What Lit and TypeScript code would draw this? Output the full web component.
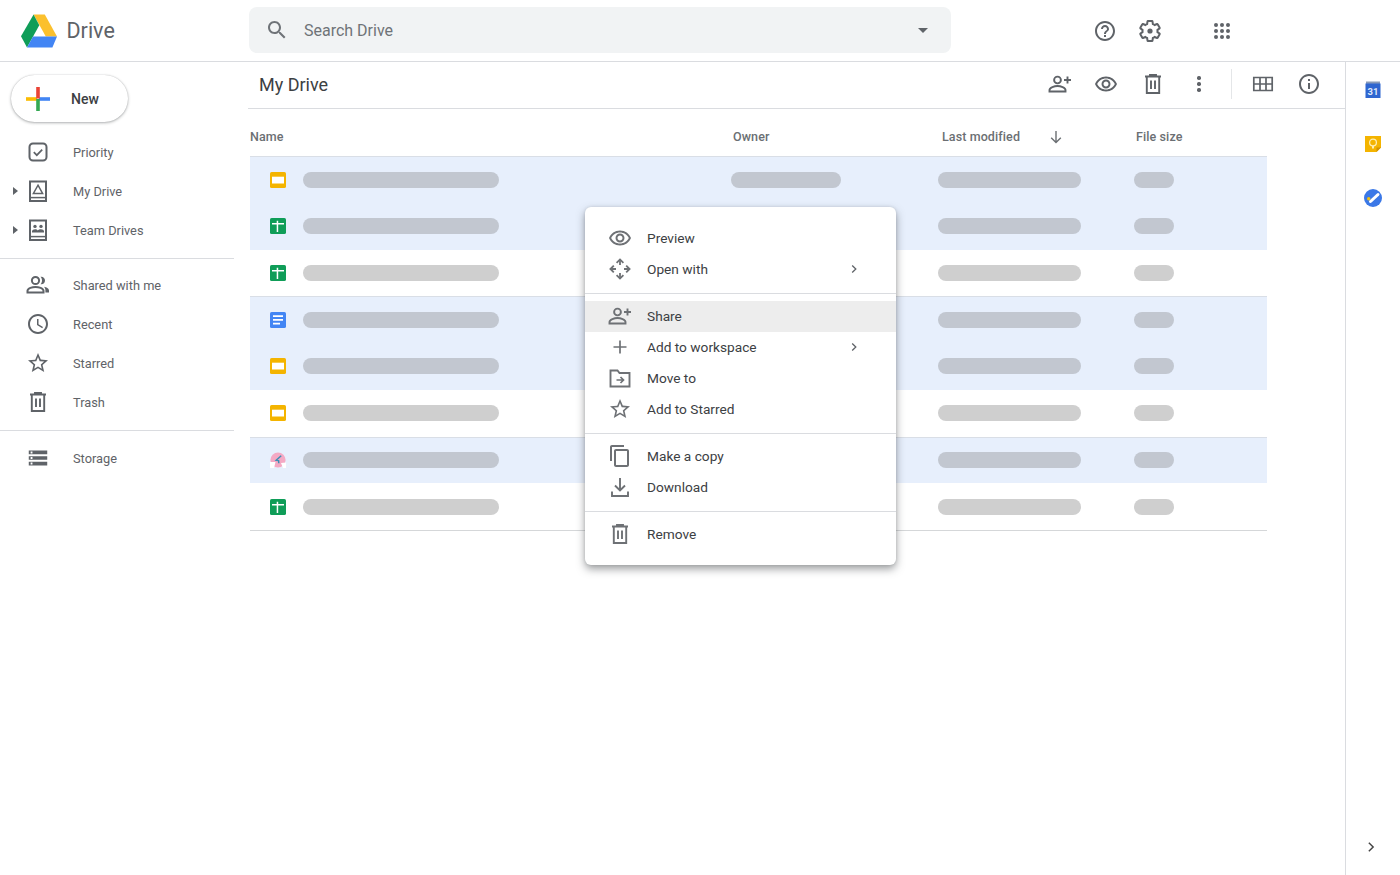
import { LitElement, css, html, svg } from 'lit';
import { customElement } from 'lit/decorators.js';

const P = {
  search: 'M15.5 14h-.79l-.28-.27C15.41 12.59 16 11.11 16 9.5 16 5.91 13.09 3 9.5 3S3 5.91 3 9.5 5.91 16 9.5 16c1.61 0 3.09-.59 4.23-1.57l.27.28v.79l5 4.99L20.49 19l-4.99-5zm-6 0C7.01 14 5 11.99 5 9.5S7.01 5 9.5 5 14 7.01 14 9.5 11.99 14 9.5 14z',
  help: 'M11 18h2v-2h-2v2zm1-16C6.48 2 2 6.48 2 12s4.48 10 10 10 10-4.48 10-10S17.52 2 12 2zm0 18c-4.41 0-8-3.59-8-8s3.59-8 8-8 8 3.59 8 8-3.59 8-8 8zm0-14c-2.21 0-4 1.79-4 4h2c0-1.1.9-2 2-2s2 .9 2 2c0 2-3 1.75-3 5h2c0-2.25 3-2.5 3-5 0-2.21-1.79-4-4-4z',
  clock: 'M11.99 2C6.47 2 2 6.48 2 12s4.47 10 9.99 10C17.52 22 22 17.52 22 12S17.52 2 11.99 2zM12 20c-4.42 0-8-3.58-8-8s3.58-8 8-8 8 3.58 8 8-3.58 8-8 8zm.5-13H11v6l5.25 3.15.75-1.23-4.5-2.67z',
  star: 'M22 9.24l-7.19-.62L12 2 9.19 8.63 2 9.24l5.46 4.73L5.82 21 12 17.27 18.18 21l-1.63-7.03L22 9.24zM12 15.4l-3.76 2.27 1-4.28-3.32-2.88 4.38-.38L12 6.1l1.71 4.04 4.38.38-3.32 2.88 1 4.28L12 15.4z',
  storage: 'M2 20h20v-4H2v4zm2-3h2v2H4v-2zM2 4v4h20V4H2zm4 3H4V5h2v2zm-4 7h20v-4H2v4zm2-3h2v2H4v-2z',
  eye: 'M12 6.5c3.79 0 7.17 2.13 8.82 5.5-1.65 3.37-5.02 5.5-8.82 5.5S4.83 15.37 3.18 12C4.83 8.63 8.21 6.5 12 6.5m0-2C7 4.5 2.73 7.61 1 12c1.73 4.39 6 7.5 11 7.5s9.27-3.11 11-7.5c-1.73-4.39-6-7.5-11-7.5zm0 5c1.38 0 2.5 1.12 2.5 2.5s-1.12 2.5-2.5 2.5-2.5-1.12-2.5-2.5 1.12-2.5 2.5-2.5m0-2c-2.48 0-4.5 2.02-4.5 4.5s2.02 4.5 4.5 4.5 4.5-2.02 4.5-4.5-2.02-4.5-4.5-4.5z',
  info: 'M11 7h2v2h-2zm0 4h2v6h-2zm1-9C6.48 2 2 6.48 2 12s4.48 10 10 10 10-4.48 10-10S17.52 2 12 2zm0 18c-4.41 0-8-3.59-8-8s3.59-8 8-8 8 3.59 8 8-3.59 8-8 8z',
  copy: 'M16 1H4c-1.1 0-2 .9-2 2v14h2V3h12V1zm3 4H8c-1.1 0-2 .9-2 2v14c0 1.1.9 2 2 2h11c1.1 0 2-.9 2-2V7c0-1.1-.9-2-2-2zm0 16H8V7h11v14z',
  gear: 'M19.43 12.98c.04-.32.07-.64.07-.98s-.03-.66-.07-.98l2.11-1.65c.19-.15.24-.42.12-.64l-2-3.46c-.12-.22-.39-.3-.61-.22l-2.49 1c-.52-.4-1.08-.73-1.69-.98l-.38-2.65C14.46 2.18 14.25 2 14 2h-4c-.25 0-.46.18-.49.42l-.38 2.65c-.61.25-1.17.59-1.69.98l-2.49-1c-.23-.09-.49 0-.61.22l-2 3.46c-.13.22-.07.49.12.64l2.11 1.65c-.04.32-.07.65-.07.98s.03.66.07.98l-2.11 1.65c-.19.15-.24.42-.12.64l2 3.46c.12.22.39.3.61.22l2.49-1c.52.4 1.08.73 1.69.98l.38 2.65c.03.24.24.42.49.42h4c.25 0 .46-.18.49-.42l.38-2.65c.61-.25 1.17-.59 1.69-.98l2.49 1c.23.09.49 0 .61-.22l2-3.46c.12-.22.07-.49-.12-.64l-2.11-1.65z',
};

const fillIcon = (d: string) => html`<svg class="ic" viewBox="0 0 24 24"><path d=${d}></path></svg>`;

const personAdd = html`<svg class="ic" viewBox="0 0 24 24" fill="none" stroke="currentColor" stroke-width="1.9">
  <circle cx="9.5" cy="8" r="3.4"></circle>
  <path d="M1.5 19.5v-1.6c0-2.5 5-3.9 8-3.9s8 1.4 8 3.9v1.6z"></path>
  <path d="M19.5 4.5v7M16 8h7"></path>
</svg>`;

const trash = html`<svg class="ic" viewBox="0 0 24 24" fill="none" stroke="currentColor" stroke-width="1.9">
  <path d="M4 4.5h16M9 4.5V3h6v1.5M5.8 4.5V21h12.4V4.5M10 8.5v8.5M14 8.5v8.5"></path>
</svg>`;

const icons: Record<string, unknown> = {
  priority: html`<svg class="ic" viewBox="0 0 24 24" fill="none" stroke="currentColor" stroke-width="2">
    <rect x="3.5" y="3.5" width="17" height="17" rx="3.5"></rect>
    <path d="M7.8 12.2l3 3 5.4-5.6" stroke-width="1.7"></path>
  </svg>`,
  mydrive: html`<svg class="ic" viewBox="0 0 24 24" fill="none" stroke="currentColor" stroke-width="2">
    <path d="M4 2.5h16V22H4z"></path>
    <path d="M4 18.6h16" stroke-width="1.5"></path>
    <path d="M12 6.2l4.6 8.2H7.4z" stroke-width="1.5"></path>
  </svg>`,
  teamdrives: html`<svg class="ic" viewBox="0 0 24 24" fill="none" stroke="currentColor" stroke-width="2">
    <path d="M4 2.5h16V22H4z"></path>
    <path d="M4 18.6h16" stroke-width="1.5"></path>
    <g fill="currentColor" stroke="none">
      <circle cx="9" cy="8.4" r="1.7"></circle>
      <circle cx="15" cy="8.4" r="1.7"></circle>
      <path d="M6 14.5v-1.2c0-1.3 1.8-2 3-2s2.4.5 2.8 1.3c.4-.8 1.9-1.3 3.2-1.3s3 .7 3 2v1.2z"></path>
    </g>
  </svg>`,
  shared: html`<svg class="ic" viewBox="0 0 24 24" fill="none" stroke="currentColor" stroke-width="2">
    <circle cx="9.5" cy="7.5" r="3.6"></circle>
    <path d="M1.5 19.5v-1.7c0-2.6 5-3.8 8-3.8s8 1.2 8 3.8v1.7z"></path>
    <path d="M14.5 3.8c2.6-.5 4.5 1.5 4.5 3.7s-1.9 4.2-4.5 3.7c1-1 1.5-2.3 1.5-3.7s-.5-2.7-1.5-3.7z" fill="currentColor" stroke="none"></path>
    <path d="M18 13.8c2.4.5 5 1.6 5 3.8v1.9h-3.6v-2c0-1.6-.5-2.7-1.4-3.7z" fill="currentColor" stroke="none"></path>
  </svg>`,
  clock: fillIcon(P.clock),
  star: fillIcon(P.star),
  trash,
  storage: html`<svg class="ic" viewBox="-1 -1 26 26"><path d=${P.storage}></path></svg>`,
  eye: fillIcon(P.eye),
  openwith: html`<svg class="ic" viewBox="0 0 24 24" fill="none" stroke="currentColor" stroke-width="1.8">
    <path d="M8.6 5.8L12 2.4l3.4 3.4M8.6 18.2l3.4 3.4 3.4-3.4M5.8 8.6L2.4 12l3.4 3.4M18.2 8.6l3.4 3.4-3.4 3.4"></path>
    <path d="M12 3v5M12 16v5M3 12h5M16 12h5"></path>
  </svg>`,
  person: personAdd,
  plus: html`<svg class="ic" viewBox="0 0 24 24" fill="none" stroke="currentColor" stroke-width="1.7">
    <path d="M12 5.5v13M5.5 12h13"></path>
  </svg>`,
  move: html`<svg class="ic" viewBox="0 0 24 24" fill="none" stroke="currentColor" stroke-width="1.9">
    <path d="M2.5 4.5h7l2 2.5h10v13.5h-19z"></path>
    <path d="M8.5 14h6.5M12.5 11l3 3-3 3" stroke-width="1.7"></path>
  </svg>`,
  copy: fillIcon(P.copy),
  download: html`<svg class="ic" viewBox="0 0 24 24" fill="none" stroke="currentColor" stroke-width="1.9">
    <path d="M12 3v12M7 10.5l5 5 5-5M4 16.5V21h16v-4.5"></path>
  </svg>`,
};

const chevron = html`<svg class="chev" viewBox="0 0 10 10" fill="none" stroke="currentColor" stroke-width="1.3">
  <path d="M3.2 1.5L6.8 5 3.2 8.5"></path>
</svg>`;

const fileIcons: Record<string, unknown> = {
  slides: html`<svg class="file" viewBox="0 0 16 16"><rect width="16" height="16" rx="1.6" fill="#f4b400"></rect><rect x="2" y="4.7" width="12" height="6.8" fill="#fff"></rect></svg>`,
  sheets: html`<svg class="file" viewBox="0 0 16 16"><rect width="16" height="16" rx="1.6" fill="#0f9d58"></rect><path d="M6.7 2.8h1.5v2.2H14v1.4H8.2V14H6.7V6.4H2V5h4.7z" fill="#fff"></path></svg>`,
  docs: html`<svg class="file" viewBox="0 0 16 16"><rect width="16" height="16" rx="1.6" fill="#4285f4"></rect><path d="M3 3.2h10v1.8H3zM3 7h10v1.8H3zM3 10.8h7v1.8H3z" fill="#fff"></path></svg>`,
  drawing: html`<svg class="file" viewBox="0 0 16 16"><circle cx="8" cy="8" r="7.6" fill="#f4a9c4"></circle><path d="M0 10h5.5L4 16H0zM16 10.5l-5 .5 2 5h3z" fill="#fff"></path><path d="M11.2 3.8L6.2 8.2l2.4.4.2 2.6" fill="none" stroke="#3d8fb5" stroke-width="1.5"></path></svg>`,
};

const rows = [
  { type: 'slides', selected: true, owner: true, top: true },
  { type: 'sheets', selected: true, owner: false, top: false },
  { type: 'sheets', selected: false, owner: false, top: false },
  { type: 'docs', selected: true, owner: false, top: true },
  { type: 'slides', selected: true, owner: false, top: false },
  { type: 'slides', selected: false, owner: false, top: false },
  { type: 'drawing', selected: true, owner: false, top: true },
  { type: 'sheets', selected: false, owner: false, top: false },
];

const navGroups = [
  [
    { icon: 'priority', label: 'Priority', arrow: false },
    { icon: 'mydrive', label: 'My Drive', arrow: true },
    { icon: 'teamdrives', label: 'Team Drives', arrow: true },
  ],
  [
    { icon: 'shared', label: 'Shared with me', arrow: false },
    { icon: 'clock', label: 'Recent', arrow: false },
    { icon: 'star', label: 'Starred', arrow: false },
    { icon: 'trash', label: 'Trash', arrow: false },
  ],
  [{ icon: 'storage', label: 'Storage', arrow: false }],
];

const menuGroups = [
  [
    { icon: 'eye', label: 'Preview' },
    { icon: 'openwith', label: 'Open with', more: true },
  ],
  [
    { icon: 'person', label: 'Share', active: true },
    { icon: 'plus', label: 'Add to workspace', more: true },
    { icon: 'move', label: 'Move to' },
    { icon: 'star', label: 'Add to Starred' },
  ],
  [
    { icon: 'copy', label: 'Make a copy' },
    { icon: 'download', label: 'Download' },
  ],
  [{ icon: 'trash', label: 'Remove' }],
];

@customElement('app-root')
export class AppRoot extends LitElement {
  static styles = css`
    :host {
      display: flex;
      flex-direction: column;
      position: relative;
      height: 875px;
      overflow: hidden;
      background: #fff;
      font-family: Roboto, "Liberation Sans", sans-serif;
      color: #5f6368;
    }

    .ic {
      display: block;
      width: 24px;
      height: 24px;
      fill: currentColor;
      flex: none;
    }
    .ic[fill='none'] {
      fill: none;
    }

    header {
      display: flex;
      align-items: center;
      height: 61px;
      flex: none;
      border-bottom: 1px solid #dadce0;
    }
    .brand {
      display: flex;
      align-items: center;
      gap: 9.5px;
      width: 228px;
      padding-left: 21px;
      font-size: 21.5px;
      color: #5f6368;
    }
    .search {
      display: flex;
      align-items: center;
      width: 702px;
      height: 46px;
      margin-bottom: 1px;
      padding: 0 16px;
      box-sizing: border-box;
      border-radius: 8px;
      background: #f1f3f4;
      font-size: 16px;
      color: #6f7378;
    }
    .search .ic {
      margin-right: 15px;
    }
    .search span {
      flex: 1;
    }
    .caret {
      width: 0;
      height: 0;
      margin-right: 7px;
      border: 5px solid transparent;
      border-top: 5px solid #5f6368;
      border-bottom: 0;
    }
    .top-icons {
      display: flex;
      align-items: center;
      margin-left: 142px;
    }
    .top-icons .ic:nth-child(2) {
      margin: 0 48px 0 21px;
    }

    .body {
      flex: 1;
      display: flex;
      min-height: 0;
    }

    nav {
      width: 234px;
      flex: none;
      padding-top: 13px;
    }
    .new {
      display: flex;
      align-items: center;
      width: 117px;
      height: 47px;
      margin-left: 11px;
      box-sizing: border-box;
      padding-left: 15px;
      gap: 21px;
      border-radius: 24px;
      background: #fff;
      box-shadow: 0 1px 3px rgba(60, 64, 67, 0.4), 0 0 1px rgba(60, 64, 67, 0.3);
      font-size: 14px;
      font-weight: 500;
      color: #3c4043;
    }
    .new svg {
      width: 24px;
      height: 24px;
    }
    .nav-group {
      padding-bottom: 8.5px;
      border-top: 1px solid #dadce0;
    }
    .nav-group:nth-child(1) {
      border-top: 0;
      padding-top: 10.5px;
    }
    .nav-group:nth-child(2) {
      padding-top: 6.5px;
    }
    .nav-group:nth-child(3) {
      padding-top: 7.5px;
    }
    .nav-item {
      display: grid;
      grid-template-columns: 11px 15px 24px 1fr;
      align-items: center;
      height: 39px;
      font-size: 12.8px;
      color: #5f6368;
    }
    .nav-item .ic {
      grid-column: 3;
      grid-row: 1;
    }
    .nav-item span {
      grid-column: 4;
      padding-left: 23px;
    }
    .arrow {
      grid-column: 2;
      grid-row: 1;
      width: 0;
      height: 0;
      border: 4.5px solid transparent;
      border-left: 5px solid #5f6368;
      border-right: 0;
      margin-left: 2px;
    }

    main {
      flex: 1;
      min-width: 0;
      margin-left: 14px;
    }
    .toolbar {
      display: flex;
      align-items: center;
      height: 44px;
      padding-left: 11px;
      padding-bottom: 2px;
      border-bottom: 1px solid #dadce0;
      font-size: 18px;
      color: #3c4043;
    }
    .title {
      flex: 1;
    }
    .actions {
      display: flex;
      align-items: center;
      padding-right: 24px;
      color: #5f6368;
    }
    .actions > * {
      margin-left: 22.5px;
    }
    .vert {
      width: 24px;
      height: 24px;
      display: flex;
      flex-direction: column;
      align-items: center;
      justify-content: center;
      gap: 2.6px;
    }
    .vert i {
      width: 3.4px;
      height: 3.4px;
      border-radius: 50%;
      background: #5f6368;
    }
    .sep {
      width: 1px;
      height: 30px;
      background: #e4e6e8;
      margin-left: 20px;
      margin-right: -4px;
    }

    .table {
      width: 1017px;
      margin-left: 2px;
    }
    .cols {
      display: grid;
      grid-template-columns: 481px 207px 196px 1fr;
      align-items: center;
    }
    .head {
      height: 47px;
      font-size: 12.5px;
      font-weight: 500;
      letter-spacing: 0.1px;
      color: #6b6f73;
      padding-top: 17px;
      box-sizing: border-box;
      padding-bottom: 9px;
    }
    .head div:nth-child(2),
    .head div:nth-child(4) {
      padding-left: 2px;
    }
    .head div:nth-child(3) {
      display: flex;
      align-items: center;
      padding-left: 4px;
    }
    .head svg {
      width: 16px;
      height: 16px;
      margin-left: 28px;
    }
    .row {
      height: 46.75px;
      box-sizing: border-box;
    }
    .row.top {
      border-top: 1px solid #d9dee6;
    }
    .row.sel {
      background: #e7effc;
    }
    .name {
      display: flex;
      align-items: center;
      gap: 17px;
      padding-left: 20px;
    }
    .file {
      display: block;
      width: 16px;
      height: 16px;
    }
    .pill {
      height: 16px;
      border-radius: 8px;
      background: #cfcfcf;
    }
    .sel .pill {
      background: #c2c7d0;
    }
    .table-end {
      border-top: 1px solid #d5d7d9;
    }

    .rail {
      width: 55px;
      flex: none;
      display: flex;
      flex-direction: column;
      align-items: center;
      border-left: 1px solid #dadce0;
      padding-top: 19px;
      box-sizing: border-box;
    }
    .rail .app {
      display: block;
      width: 18px;
      height: 18px;
      margin-bottom: 36px;
    }
    .rail .more {
      margin-top: auto;
      margin-bottom: 22px;
      margin-right: 4px;
      width: 12px;
      height: 12px;
      color: #444;
    }
    .rail text {
      font: 700 9.5px Roboto, sans-serif;
    }

    .menu {
      position: absolute;
      left: 585px;
      top: 207px;
      width: 311px;
      height: 358px;
      box-sizing: border-box;
      padding-top: 15.5px;
      border-radius: 6px;
      background: #fff;
      box-shadow: 0 4px 8px rgba(60, 64, 67, 0.5), 0 0 3px rgba(60, 64, 67, 0.15);
    }
    .menu-group {
      padding: 7px 0 8px;
      border-top: 1px solid #dadce0;
    }
    .menu-group:first-child {
      border-top: 0;
      padding-top: 0;
    }
    .menu-item {
      display: flex;
      align-items: center;
      height: 31px;
      padding-left: 23px;
      font-size: 13.7px;
      color: #3c4043;
    }
    .menu-item.active {
      background: #ededed;
    }
    .menu-item .ic {
      color: #6e7175;
      margin-right: 15px;
    }
    .menu-item span {
      flex: 1;
    }
    .chev {
      display: block;
      width: 10px;
      height: 10px;
      margin-right: 37px;
      color: #5f6368;
    }
  `;

  private renderRow(r: (typeof rows)[number]) {
    const cls = `cols row${r.selected ? ' sel' : ''}${r.top ? ' top' : ''}`;
    return html`<div class=${cls}>
      <div class="name">${fileIcons[r.type]}<div class="pill" style="width:196px"></div></div>
      <div>${r.owner ? html`<div class="pill" style="width:110px"></div>` : ''}</div>
      <div class="pill" style="width:143px"></div>
      <div class="pill" style="width:40px"></div>
    </div>`;
  }

  render() {
    return html`
      <header>
        <div class="brand">
          <svg width="36" height="34" viewBox="21 14 36 33">
            <path d="M33.6 14h11.2l12.2 22H45.8z" fill="#fbc02d"></path>
            <path d="M33.6 14L21 35.8 27 47l12.3-22.3z" fill="#0f9d58"></path>
            <path d="M27 47h25.4L57 36H33z" fill="#4285f4"></path>
          </svg>
          <span>Drive</span>
        </div>
        <div class="search">
          ${fillIcon(P.search)}
          <span>Search Drive</span>
          <div class="caret"></div>
        </div>
        <div class="top-icons">
          ${fillIcon(P.help)}
          <svg class="ic" viewBox="0 0 24 24" fill="none" stroke="currentColor" stroke-width="2">
            <path d=${P.gear}></path>
            <circle cx="12" cy="12" r="2.6" fill="currentColor" stroke="none"></circle>
          </svg>
          <svg class="ic" viewBox="0 0 24 24">
            ${[6, 12, 18].map(y => [6, 12, 18].map(x => svg`<circle cx=${x} cy=${y} r="2"></circle>`))}
          </svg>
        </div>
      </header>
      <div class="body">
        <nav>
          <div class="new">
            <svg viewBox="0 0 24 24">
              <rect x="0" y="10.2" width="11" height="3.6" fill="#fbbc04"></rect>
              <rect x="13" y="10.2" width="11" height="3.6" fill="#4285f4"></rect>
              <rect x="10.2" y="0" width="3.6" height="11.5" fill="#ea4335"></rect>
              <rect x="10.2" y="12" width="3.6" height="12" fill="#34a853"></rect>
            </svg>
            New
          </div>
          <div>
            ${navGroups.map(g => html`<div class="nav-group">
              ${g.map(n => html`<div class="nav-item">
                ${n.arrow ? html`<div class="arrow"></div>` : ''}
                ${icons[n.icon]}
                <span>${n.label}</span>
              </div>`)}
            </div>`)}
          </div>
        </nav>
        <main>
          <div class="toolbar">
            <div class="title">My Drive</div>
            <div class="actions">
              ${personAdd}
              ${fillIcon(P.eye)}
              ${trash}
              <div class="vert"><i></i><i></i><i></i></div>
              <div class="sep"></div>
              <svg class="ic" viewBox="0 0 24 24" fill="none" stroke="currentColor" stroke-width="1.7">
                <path d="M2.8 5.5h18.4v13H2.8zM2.8 12h18.4M9 5.5v13M15 5.5v13"></path>
              </svg>
              ${fillIcon(P.info)}
            </div>
          </div>
          <div class="table">
            <div class="cols head">
              <div>Name</div>
              <div>Owner</div>
              <div>
                Last modified
                <svg viewBox="0 0 16 16" fill="none" stroke="currentColor" stroke-width="1.4">
                  <path d="M8 2v11.5M3.2 8.8L8 13.5l4.8-4.7"></path>
                </svg>
              </div>
              <div>File size</div>
            </div>
            ${rows.map(r => this.renderRow(r))}
            <div class="table-end"></div>
          </div>
        </main>
        <aside class="rail">
          <svg class="app" viewBox="0 0 18 18">
            <rect x="2" y="0.5" width="14" height="3" fill="#8a9bb8"></rect>
            <rect x="1.5" y="2.5" width="15" height="14.5" fill="#2f66d0"></rect>
            <text x="9" y="13.5" text-anchor="middle" fill="#dfe8fa">31</text>
          </svg>
          <svg class="app" viewBox="0 0 18 18">
            <path d="M1 1h16v11.5L12.5 17H1z" fill="#f4b400"></path>
            <path d="M17 12.5L12.5 17v-4.5z" fill="#d29200"></path>
            <circle cx="9" cy="7.5" r="3.4" fill="none" stroke="#fdeeb5" stroke-width="1.3"></circle>
            <path d="M8 11v2.5h2V11z" fill="#fdeeb5"></path>
          </svg>
          <svg class="app" viewBox="0 0 18 18">
            <circle cx="9" cy="9" r="9" fill="#3b78e7"></circle>
            <path d="M6.5 12.5L14 5.5" stroke="#fff" stroke-width="3" stroke-linecap="round"></path>
            <circle cx="4.7" cy="9.8" r="1.7" fill="#f4c20d"></circle>
          </svg>
          <svg class="more" viewBox="0 0 10 10" fill="none" stroke="currentColor" stroke-width="1.2">
            <path d="M3.2 1.5L6.8 5 3.2 8.5"></path>
          </svg>
        </aside>
      </div>
      <div class="menu">
        ${menuGroups.map(g => html`<div class="menu-group">
          ${g.map((m: any) => html`<div class="menu-item ${m.active ? 'active' : ''}">
            ${icons[m.icon]}
            <span>${m.label}</span>
            ${m.more ? chevron : ''}
          </div>`)}
        </div>`)}
      </div>
    `;
  }
}
